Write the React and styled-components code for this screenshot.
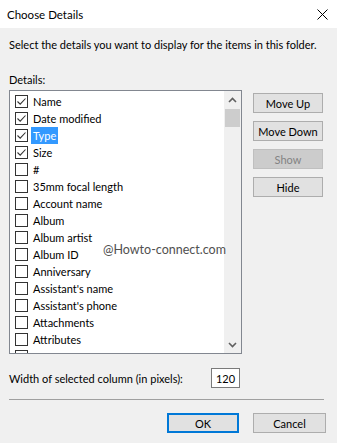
import React from 'react'
import styled, { createGlobalStyle } from 'styled-components';

const Global = createGlobalStyle`
  html, body {
    margin: 0;
    padding: 0;
    background: #f0f0f0;
  }
  * {
    box-sizing: border-box;
  }
`;

const Dialog = styled.div`
  position: relative;
  width: 337px;
  height: 443px;
  background: #f0f0f0;
  font-family: Lato, "Noto Sans", sans-serif;
  font-size: 11px;
  color: #000;
  overflow: hidden;
  white-space: nowrap;
`;

const TitleBar = styled.div`
  height: 28px;
  background: #fff;
  display: flex;
  align-items: center;
  justify-content: space-between;
  padding: 0 9px 0 7px;
`;

const Title = styled.span`
  font-size: 11.5px;
`;

const CloseButton = styled.div`
  width: 12px;
  height: 12px;
  display: flex;
  align-items: center;
  justify-content: center;
`;

const Body = styled.div`
  padding: 0 11px 0 9px;
`;

const Intro = styled.div`
  margin-top: 9px;
  line-height: 16px;
`;

const Label = styled.div`
  margin-top: 19px;
  line-height: 16px;
`;

const Main = styled.div`
  display: flex;
  gap: 11px;
  margin-top: 2px;
`;

const ListBox = styled.div`
  width: 233px;
  height: 264px;
  border: 1px solid #828790;
  background: #fff;
  display: flex;
`;

const Rows = styled.div`
  flex: 1;
  padding: 2px 0 0 5px;
  overflow: hidden;
`;

const Row = styled.div`
  height: 17px;
  display: flex;
  align-items: center;
  gap: 3px;
`;

const Box = styled.div`
  width: 13px;
  height: 13px;
  border: 1px solid #333;
  background: #fff;
  display: flex;
  align-items: center;
  justify-content: center;
  flex: none;
`;

const RowText = styled.span`
  padding: 0 2px;
  line-height: 17px;
  background: ${p => (p.$selected ? '#3399ff' : 'transparent')};
  color: ${p => (p.$selected ? '#fff' : '#000')};
`;

const ScrollBar = styled.div`
  width: 17px;
  background: #f0f0f0;
  display: flex;
  flex-direction: column;
`;

const ArrowButton = styled.div`
  height: 17px;
  display: flex;
  align-items: center;
  justify-content: center;
  flex: none;
`;

const Track = styled.div`
  flex: 1;
  padding: 1px 1px 0;
`;

const Thumb = styled.div`
  height: 18px;
  background: #cdcdcd;
`;

const Buttons = styled.div`
  display: flex;
  flex-direction: column;
  gap: 8px;
  padding-top: 3px;
`;

const Button = styled.div`
  width: ${p => p.$width || 70}px;
  height: 20px;
  display: flex;
  align-items: center;
  justify-content: center;
  background: ${p => (p.$disabled ? '#cccccc' : '#e1e1e1')};
  border: ${p => (p.$default ? '2px solid #0078d7' : p.$disabled ? '1px solid #bfbfbf' : '1px solid #adadad')};
  color: ${p => (p.$disabled ? '#838383' : '#000')};
`;

const WidthRow = styled.div`
  display: flex;
  align-items: center;
  justify-content: space-between;
  margin-top: 14px;
  padding-right: 86px;
`;

const NumberBox = styled.div`
  width: 29px;
  height: 20px;
  border: 1px solid #7a7a7a;
  background: #fff;
  display: flex;
  align-items: center;
  justify-content: center;
`;

const Separator = styled.div`
  border-top: 1px solid #a0a0a0;
  margin: 11px 2px 0 0;
`;

const Footer = styled.div`
  display: flex;
  justify-content: flex-end;
  gap: 14px;
  margin-top: 13px;
`;

const Watermark = styled.div`
  position: absolute;
  left: 103px;
  top: 242px;
  font-size: 12.5px;
  color: #505050;
  text-shadow: 0 0 2px #fff, 0 0 2px #fff;
`;

const Check = () => (
  <svg width="11" height="11" viewBox="0 0 11 11">
    <path d="M1.5 5.5 L4.2 8.2 L9.5 2.5" fill="none" stroke="#333" strokeWidth="1.1" />
  </svg>
);

const Chevron = ({ down }) => (
  <svg width="9" height="6" viewBox="0 0 9 6">
    <path
      d={down ? 'M1 1 L4.5 4.5 L8 1' : 'M1 5 L4.5 1.5 L8 5'}
      fill="none"
      stroke="#606060"
      strokeWidth="1.6"
    />
  </svg>
);

// last entry only peeks in at the bottom edge, so it carries no label
const items = [
  ['Name', true],
  ['Date modified', true],
  ['Type', true, true],
  ['Size', true],
  ['#'],
  ['35mm focal length'],
  ['Account name'],
  ['Album'],
  ['Album artist'],
  ['Album ID'],
  ['Anniversary'],
  ["Assistant's name"],
  ["Assistant's phone"],
  ['Attachments'],
  ['Attributes'],
  [''],
];

const App = () => (
  <Dialog>
    <Global />
    <TitleBar>
      <Title>Choose Details</Title>
      <CloseButton>
        <svg width="11" height="11" viewBox="0 0 11 11">
          <path d="M0.5 0.5 L10.5 10.5 M10.5 0.5 L0.5 10.5" stroke="#000" strokeWidth="1" />
        </svg>
      </CloseButton>
    </TitleBar>
    <Body>
      <Intro>Select the details you want to display for the items in this folder.</Intro>
      <Label>Details:</Label>
      <Main>
        <ListBox>
          <Rows>
            {items.map(([name, checked, selected], i) => (
              <Row key={i}>
                <Box>{checked && <Check />}</Box>
                {name && <RowText $selected={selected}>{name}</RowText>}
              </Row>
            ))}
          </Rows>
          <ScrollBar>
            <ArrowButton><Chevron /></ArrowButton>
            <Track><Thumb /></Track>
            <ArrowButton><Chevron down /></ArrowButton>
          </ScrollBar>
        </ListBox>
        <Buttons>
          <Button>Move Up</Button>
          <Button>Move Down</Button>
          <Button $disabled>Show</Button>
          <Button>Hide</Button>
        </Buttons>
      </Main>
      <WidthRow>
        <span>Width of selected column (in pixels):</span>
        <NumberBox>120</NumberBox>
      </WidthRow>
      <Separator />
      <Footer>
        <Button $width={72} $default>OK</Button>
        <Button $width={73}>Cancel</Button>
      </Footer>
    </Body>
    <Watermark>@Howto-connect.com</Watermark>
  </Dialog>
);

export default App
